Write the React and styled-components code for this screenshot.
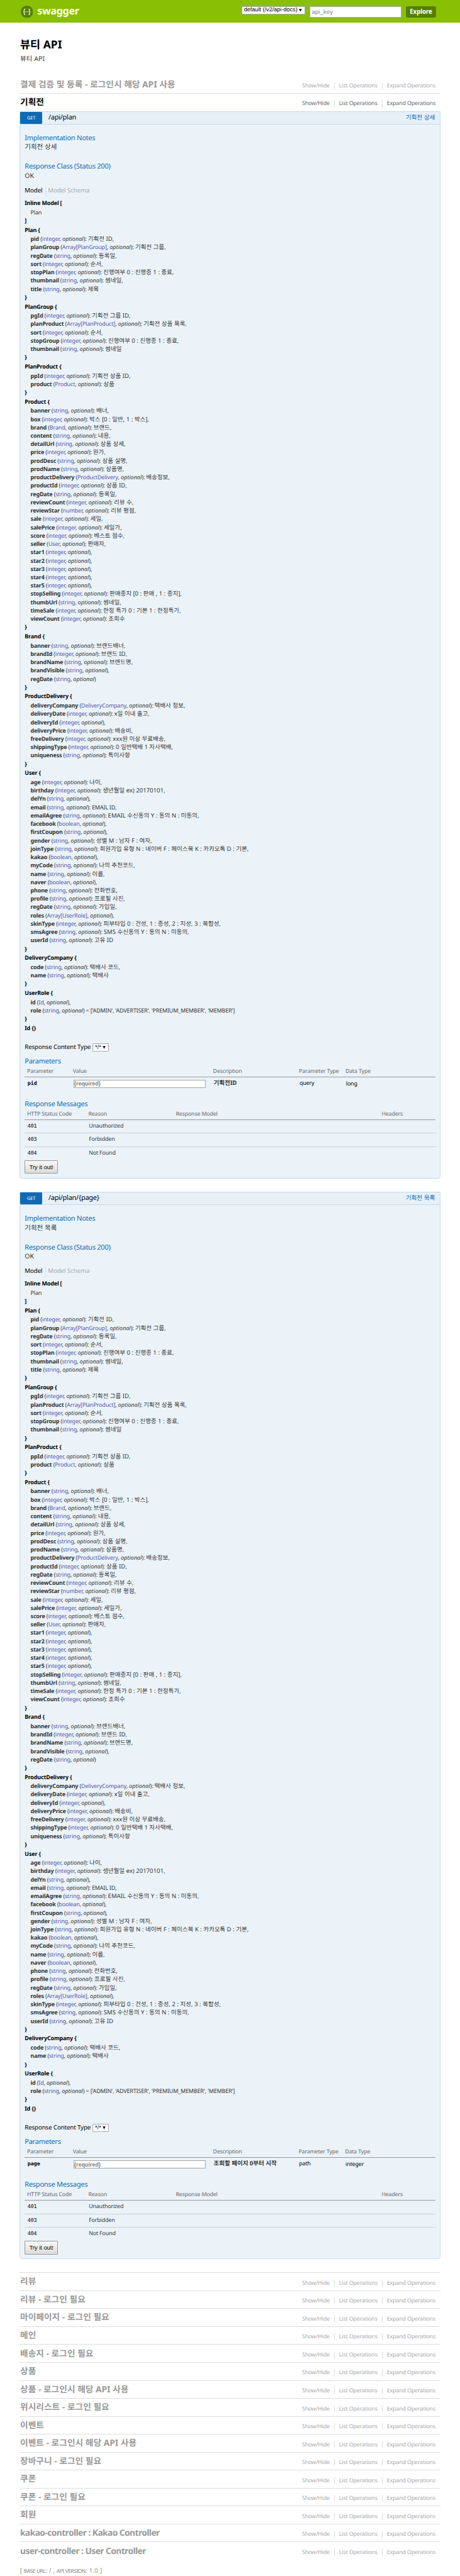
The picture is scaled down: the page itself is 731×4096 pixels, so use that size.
import React from 'react';
import styled, { createGlobalStyle, css } from 'styled-components';

/* Sizes are written in design units; one unit is this many CSS pixels. */
const UNIT = 0.69648;
const u = (n) => `${(n * UNIT).toFixed(3)}px`;

const sans = `"Noto Sans", "Noto Sans CJK KR", sans-serif`;
const control = `"Liberation Sans", "Noto Sans CJK KR", sans-serif`;
const mono = `"DejaVu Sans Mono", monospace`;

const GlobalStyle = createGlobalStyle`
  *, *::before, *::after { box-sizing: border-box; }
  html, body { margin: 0; padding: 0; background: #fff; }
  body {
    font-family: ${sans};
    color: #333;
    text-rendering: geometricPrecision;
  }
  h1, h2, h3, h4, p, ul { margin: 0; padding: 0; font-weight: 400; }
  ul { list-style: none; }
`;

const Header = styled.header`
  display: flex;
  justify-content: space-between;
  height: ${u(52)};
  padding: 0 ${u(55)} 0 ${u(47)};
  background: #89bf04;
`;

const Brand = styled.div`
  display: flex;
  align-items: center;
  gap: ${u(10)};
  height: ${u(52)};
  padding-top: ${u(1.5)};
  font-size: ${u(23.2)};
  font-weight: 700;
  letter-spacing: -0.021em;
  color: #fff;
  svg {
    width: ${u(28)};
    height: ${u(28)};
    display: block;
  }
  span {
    line-height: ${u(28)};
    padding-bottom: ${u(2)};
  }
`;

const ApiForm = styled.form`
  display: flex;
  align-items: flex-start;
  gap: ${u(10)};
  padding-top: ${u(14)};
`;

const SelectBox = styled.div`
  display: flex;
  align-items: center;
  justify-content: space-between;
  width: ${(p) => u(p.$width)};
  height: ${u(19)};
  padding: 0 ${u(6)} 0 ${u(4.5)};
  background: #fff;
  border: 1px solid #a9a9a9;
  border-radius: ${(p) => (p.$rounded ? '1px' : 0)};
  font-family: ${control};
  font-size: ${u(13.1)};
  line-height: ${u(17)};
  white-space: nowrap;
  color: #000;
  svg {
    width: ${u(7)};
    height: ${u(7)};
    margin-bottom: ${u(1)};
  }
`;

const KeyInput = styled.input`
  width: ${u(210)};
  height: ${u(26)};
  margin: 0;
  padding: 0 ${u(3.5)};
  border: 1px solid #a9a9a9;
  background: #fff;
  font-family: ${control};
  font-size: ${u(14)};
  outline: 0;
  &::placeholder { color: #858585; opacity: 1; }
`;

const ExploreButton = styled.button`
  width: ${u(68)};
  height: ${u(26)};
  margin: 0;
  padding: 0;
  border: 0;
  border-radius: ${u(4)};
  background: #547f00;
  color: #fff;
  font: 700 ${u(14)} / ${u(26)} ${sans};
  letter-spacing: -0.01em;
`;

const Page = styled.main`
  padding: ${u(36.3)} ${u(45)} 0;
`;

const Title = styled.h1`
  padding-left: ${u(1)};
  font-size: ${u(25)};
  line-height: ${u(30)};
  font-weight: 700;
  letter-spacing: 0.003em;
  color: #000;
`;

const Description = styled.p`
  margin: ${u(8.6)} 0 ${u(26.1)};
  padding-left: ${u(1)};
  font-size: ${u(15.2)};
  line-height: ${u(20)};
`;

const ResourceRow = styled.div`
  display: flex;
  justify-content: space-between;
  height: ${(p) => u(p.$active ? 40 : 41)};
  padding: 0 ${u(11)} 0 ${u(1)};
  border-bottom: ${(p) => (p.$open ? '0' : '1px solid #ddd')};
`;

const ResourceName = styled.h2`
  padding-top: ${u(4.4)};
  font-size: ${u(19.6)};
  line-height: ${u(28)};
  font-weight: 700;
  letter-spacing: ${(p) => (p.$latin ? '-0.036em' : '0.006em')};
  color: ${(p) => (p.$active ? '#000' : '#999')};
`;

const Options = styled.ul`
  display: flex;
  align-items: flex-start;
  padding-top: ${u(15)};
  color: ${(p) => (p.$active ? '#666' : '#aaa')};
`;

const Option = styled.li`
  height: ${u(16)};
  padding: 0 ${u(10)};
  font-size: ${u(12.8)};
  line-height: ${u(14)};
  letter-spacing: -0.018em;
  & + & { border-left: 1px solid #ddd; }
  &:last-child { padding-right: 0; }
`;

const Operation = styled.section`
  margin-bottom: ${u(30)};
`;

const OperationHeading = styled.div`
  display: flex;
  height: ${u(30)};
  border: 1px solid #c3d9ec;
  background: #e7f0f7;
`;

const Method = styled.span`
  width: ${u(50)};
  padding-top: ${u(1)};
  border-radius: ${u(2)};
  background: #0f6ab4;
  color: #fff;
  text-align: center;
  font-size: ${u(10.6)};
  line-height: ${u(28)};
  letter-spacing: -0.015em;
`;

const Path = styled.h3`
  flex: 1;
  padding-left: ${u(14)};
  font-size: ${u(15.7)};
  line-height: ${u(26)};
  letter-spacing: -0.02em;
  color: #000;
`;

const Summary = styled.span`
  padding-right: ${u(10.5)};
  font-size: ${u(13.8)};
  line-height: ${u(25)};
  color: #0f6ab4;
`;

const OperationBody = styled.div`
  padding: ${u(22)} ${u(10)} ${u(10)};
  height: ${u(2407)};
  border: 1px solid #c3d9ec;
  border-top: 0;
  border-radius: 0 0 ${u(6)} ${u(6)};
  background: #ebf3f9;
`;

const SectionTitle = styled.h4`
  margin-top: ${(p) => u(p.$gap || 0)};
  font-size: ${u(15.8)};
  line-height: ${u(20)};
  letter-spacing: -0.022em;
  color: #0f6ab4;
`;

const Note = styled.p`
  margin-top: ${u(2)};
  font-size: ${u(15.1)};
  line-height: ${u(20)};
`;

const ModelTabs = styled.ul`
  display: flex;
  height: ${u(25)};
  margin: ${u(11)} 0 ${u(5)};
  font-size: ${u(14)};
  line-height: ${u(23)};
  letter-spacing: -0.011em;
`;

const ModelTab = styled.li`
  color: ${(p) => (p.$selected ? '#000' : '#aaa')};
  & + & {
    margin-left: ${u(6)};
    padding-left: ${u(5)};
    border-left: 1px solid #ddd;
  }
`;

const signatureText = css`
  font-size: ${u(12.9)};
  letter-spacing: -0.017em;
  white-space: nowrap;
`;

const ModelBrace = styled.div`
  ${signatureText}
  line-height: ${u(21)};
  font-weight: 700;
  color: #000;
`;

const Property = styled.div`
  ${signatureText}
  padding-left: ${u(13.3)};
  line-height: ${u(19)};
`;

const PropName = styled.span`
  font-weight: 700;
`;

const PropType = styled.span`
  color: #55a;
`;

const PropOptional = styled.span`
  font-style: italic;
  letter-spacing: 0.004em;
`;

const PropNote = styled.span`
  font-size: ${(p) => u(p.$latin ? 12.9 : 13.6)};
  letter-spacing: ${(p) => (p.$latin ? '-0.019em' : '0.004em')};
`;

const ContentTypeRow = styled.div`
  display: flex;
  align-items: flex-start;
  gap: ${u(4)};
  height: ${u(19)};
  margin-top: ${u(24)};
  color: #000;
`;

const ContentTypeLabel = styled.label`
  font-size: ${u(14)};
  line-height: ${u(17.5)};
  letter-spacing: -0.014em;
`;

const paramColumns = css`
  grid-template-columns: ${u(104.5)} ${u(320)} ${(p) => u(p.$descWidth)} ${u(106)} 1fr;
`;

const codeColumns = css`
  grid-template-columns: ${u(140)} ${u(199.5)} ${u(469.5)} 1fr;
`;

const TableHead = styled.div`
  display: grid;
  ${(p) => (p.$codes ? codeColumns : paramColumns)}
  height: ${u(21)};
  margin-top: ${u(5)};
  border-bottom: 1px solid #999;
  font-size: ${u(12.6)};
  line-height: ${u(16)};
  letter-spacing: -0.014em;
  color: #666;
  span { padding-left: ${u(5.3)}; white-space: nowrap; }
`;

const ParamRow = styled.div`
  display: grid;
  ${paramColumns}
  align-items: start;
  height: ${u(52)};
  padding-top: ${u(6)};
`;

const ParamCell = styled.div`
  padding: ${(p) => u(p.$drop || 0)} 0 0 ${u(6.5)};
  font-size: ${u(12.7)};
  line-height: ${u(15)};
  letter-spacing: -0.014em;
  white-space: nowrap;
  color: #000;
`;

const ParamName = styled(ParamCell)`
  font-family: ${mono};
  font-size: ${u(11.9)};
  letter-spacing: 0;
  line-height: ${u(16)};
  font-weight: 700;
`;

const ParamDescription = styled(ParamCell)`
  font-size: ${u(13.6)};
  letter-spacing: 0.003em;
  font-weight: 700;
  color: #333;
`;

const ParamInput = styled.input`
  display: block;
  width: ${u(302)};
  height: ${u(19)};
  margin: 0 0 0 ${u(6.5)};
  padding: 0 0 0 ${u(0.5)};
  border: 1px solid #a3a3a3;
  background: #fff;
  font-family: ${control};
  font-size: ${u(12.9)};
  font-weight: 700;
  outline: 0;
  &::placeholder { color: #808080; opacity: 1; }
`;

const CodeRow = styled.div`
  display: grid;
  ${codeColumns}
  height: ${(p) => u(p.$last ? 30 : 31)};
  border-bottom: ${(p) => (p.$last ? '0' : '1px solid #ccc')};
`;

const StatusCode = styled.span`
  padding-left: ${u(6.3)};
  font-family: ${mono};
  font-size: ${u(11.9)};
  line-height: ${u(28)};
  color: #000;
`;

const Reason = styled.span`
  padding-left: ${u(6.3)};
  font-size: ${u(12.7)};
  line-height: ${u(28.5)};
  letter-spacing: -0.016em;
`;

const TryButton = styled.button`
  display: block;
  width: ${u(76)};
  height: ${u(31)};
  margin: 0;
  padding: 0;
  border: 1px solid #999;
  border-radius: 1px;
  background: linear-gradient(#f8f8f8, #dcdcdc);
  color: #000;
  font: ${u(13.3)} ${control};
`;

const ResourceList = styled.div`
  border-top: 1px solid #ddd;
  padding-top: calc(${u(1)} - 1px);
`;

const Footer = styled.footer`
  margin-top: ${u(15.5)};
  padding-left: ${u(0.5)};
  height: ${u(20)};
  overflow: hidden;
  font-size: ${u(15)};
  line-height: ${u(20)};
  color: #999;
  white-space: nowrap;
`;

const SmallCaps = styled.span`
  font-variant: small-caps;
  letter-spacing: -0.058em;
`;

const SwaggerLogo = () => (
  <svg viewBox="0 0 28 28" fill="none">
    <circle cx="14" cy="14" r="14" fill="#547f00" />
    <g stroke="#fff" strokeWidth="1.7" strokeLinecap="round" strokeLinejoin="round">
      <path d="M10 7.5H9.4Q7.9 7.5 7.9 9V11.8Q7.9 13.7 6.2 14Q7.9 14.3 7.9 16.2V19Q7.9 20.5 9.4 20.5H10" />
      <path d="M18 7.5H18.6Q20.1 7.5 20.1 9V11.8Q20.1 13.7 21.8 14Q20.1 14.3 20.1 16.2V19Q20.1 20.5 18.6 20.5H18" />
    </g>
    <g fill="#fff">
      <circle cx="11" cy="14" r="1" />
      <circle cx="14" cy="14" r="1" />
      <circle cx="17" cy="14" r="1" />
    </g>
  </svg>
);

const Arrow = () => (
  <svg viewBox="0 0 7 7">
    <path d="M0.3 0.3H6.7L3.5 6.8Z" fill="#000" />
  </svg>
);

/* Each property is [name, type, note]; notes carry no trailing comma. */
const I = 'integer';
const S = 'string';
const B = 'boolean';

const MODELS = [
  ['Plan', [
    ['pid', I, '기획전 ID'],
    ['planGroup', 'Array[PlanGroup]', '기획전 그룹'],
    ['regDate', S, '등록일'],
    ['sort', I, '순서'],
    ['stopPlan', I, '진행여부 0 : 진행중 1 : 종료'],
    ['thumbnail', S, '썸네일'],
    ['title', S, '제목'],
  ]],
  ['PlanGroup', [
    ['pgId', I, '기획전 그룹 ID'],
    ['planProduct', 'Array[PlanProduct]', '기획전 상품 목록'],
    ['sort', I, '순서'],
    ['stopGroup', I, '진행여부 0 : 진행중 1 : 종료'],
    ['thumbnail', S, '썸네일'],
  ]],
  ['PlanProduct', [
    ['ppId', I, '기획전 상품 ID'],
    ['product', 'Product', '상품'],
  ]],
  ['Product', [
    ['banner', S, '배너'],
    ['box', I, '박스 [0 : 일반, 1 : 박스]'],
    ['brand', 'Brand', '브랜드'],
    ['content', S, '내용'],
    ['detailUrl', S, '상품 상세'],
    ['price', I, '원가'],
    ['prodDesc', S, '상품 설명'],
    ['prodName', S, '상품명'],
    ['productDelivery', 'ProductDelivery', '배송정보'],
    ['productId', I, '상품 ID'],
    ['regDate', S, '등록일'],
    ['reviewCount', I, '리뷰 수'],
    ['reviewStar', 'number', '리뷰 평점'],
    ['sale', I, '세일'],
    ['salePrice', I, '세일가'],
    ['score', I, '베스트 점수'],
    ['seller', 'User', '판매자'],
    ['star1', I],
    ['star2', I],
    ['star3', I],
    ['star4', I],
    ['star5', I],
    ['stopSelling', I, '판매중지 [0 : 판매 , 1 : 중지]'],
    ['thumbUrl', S, '썸네일'],
    ['timeSale', I, '한정 특가 0 : 기본 1 : 한정특가'],
    ['viewCount', I, '조회수'],
  ]],
  ['Brand', [
    ['banner', S, '브랜드배너'],
    ['brandId', I, '브랜드 ID'],
    ['brandName', S, '브랜드명'],
    ['brandVisible', S],
    ['regDate', S],
  ]],
  ['ProductDelivery', [
    ['deliveryCompany', 'DeliveryCompany', '택배사 정보'],
    ['deliveryDate', I, 'x일 이내 출고'],
    ['deliveryId', I],
    ['deliveryPrice', I, '배송비'],
    ['freeDelivery', I, 'xxx원 이상 무료배송'],
    ['shippingType', I, '0 일반택배 1 자사택배'],
    ['uniqueness', S, '특이사항'],
  ]],
  ['User', [
    ['age', I, '나이'],
    ['birthday', I, '생년월일 ex) 20170101'],
    ['delYn', S],
    ['email', S, 'EMAIL ID'],
    ['emailAgree', S, 'EMAIL 수신동의 Y : 동의 N : 미동의'],
    ['facebook', B],
    ['firstCoupon', S],
    ['gender', S, '성별 M : 남자 F : 여자'],
    ['joinType', S, '회원가입 유형 N : 네이버 F : 페이스북 K : 카카오톡 D : 기본'],
    ['kakao', B],
    ['myCode', S, '나의 추천코드'],
    ['name', S, '이름'],
    ['naver', B],
    ['phone', S, '전화번호'],
    ['profile', S, '프로필 사진'],
    ['regDate', S, '가입일'],
    ['roles', 'Array[UserRole]'],
    ['skinType', I, '피부타입 0 : 건성, 1 : 중성, 2 : 지성, 3 : 복합성'],
    ['smsAgree', S, 'SMS 수신동의 Y : 동의 N : 미동의'],
    ['userId', S, '고유 ID'],
  ]],
  ['DeliveryCompany', [
    ['code', S, '택배사 코드'],
    ['name', S, '택배사'],
  ]],
  ['UserRole', [
    ['id', 'Id'],
    ['role', S, null, "['ADMIN', 'ADVERTISER', 'PREMIUM_MEMBER', 'MEMBER']"],
  ]],
];

const RESPONSES = [
  ['401', 'Unauthorized'],
  ['403', 'Forbidden'],
  ['404', 'Not Found'],
];

const OPERATIONS = [
  {
    path: '/api/plan',
    summary: '기획전 상세',
    descWidth: 196,
    param: { name: 'pid', description: '기획전ID', kind: 'query', type: 'long' },
  },
  {
    path: '/api/plan/{page}',
    summary: '기획전 목록',
    descWidth: 195,
    param: { name: 'page', description: '조회할 페이지 0부터 시작', kind: 'path', type: 'integer' },
  },
];

const RESOURCES = [
  '리뷰',
  '리뷰 - 로그인 필요',
  '마이페이지 - 로그인 필요',
  '메인',
  '배송지 - 로그인 필요',
  '상품',
  '상품 - 로그인시 해당 API 사용',
  '위시리스트 - 로그인 필요',
  '이벤트',
  '이벤트 - 로그인시 해당 API 사용',
  '장바구니 - 로그인 필요',
  '쿠폰',
  '쿠폰 - 로그인 필요',
  '회원',
  'kakao-controller : Kakao Controller',
  'user-controller : User Controller',
];

const isLatin = (text) => /^[\x20-\x7e]*$/.test(text);

function Resource({ name, active, open }) {
  return (
    <ResourceRow $active={active} $open={open}>
      <ResourceName $active={active} $latin={isLatin(name)}>{name}</ResourceName>
      <Options $active={active}>
        <Option>Show/Hide</Option>
        <Option>List Operations</Option>
        <Option>Expand Operations</Option>
      </Options>
    </ResourceRow>
  );
}

function PropertyLine({ property, last }) {
  const [name, type, note, values] = property;
  return (
    <Property>
      <PropName>{name}</PropName> (<PropType>{type}</PropType>, <PropOptional>optional</PropOptional>)
      {note && <>: <PropNote $latin={isLatin(note)}>{note}</PropNote></>}
      {values && <> = <PropNote $latin>{values}</PropNote></>}
      {!last && ','}
    </Property>
  );
}

function Signature() {
  return (
    <div>
      <ModelBrace>Inline Model [</ModelBrace>
      <Property>Plan</Property>
      <ModelBrace>]</ModelBrace>
      {MODELS.map(([name, properties]) => (
        <React.Fragment key={name}>
          <ModelBrace>{name} {'{'}</ModelBrace>
          {properties.map((property, i) => (
            <PropertyLine key={property[0]} property={property} last={i === properties.length - 1} />
          ))}
          <ModelBrace>{'}'}</ModelBrace>
        </React.Fragment>
      ))}
      <ModelBrace>Id {'{}'}</ModelBrace>
    </div>
  );
}

function OperationPanel({ path, summary, descWidth, param }) {
  return (
    <Operation>
      <OperationHeading>
        <Method>GET</Method>
        <Path>{path}</Path>
        <Summary>{summary}</Summary>
      </OperationHeading>
      <OperationBody>
        <SectionTitle>Implementation Notes</SectionTitle>
        <Note>{summary}</Note>
        <SectionTitle $gap={23}>Response Class (Status 200)</SectionTitle>
        <Note>OK</Note>
        <ModelTabs>
          <ModelTab $selected>Model</ModelTab>
          <ModelTab>Model Schema</ModelTab>
        </ModelTabs>
        <Signature />
        <ContentTypeRow>
          <ContentTypeLabel>Response Content Type</ContentTypeLabel>
          <SelectBox $width={38} $rounded>
            */* <Arrow />
          </SelectBox>
        </ContentTypeRow>
        <SectionTitle $gap={12}>Parameters</SectionTitle>
        <TableHead $descWidth={descWidth}>
          <span>Parameter</span>
          <span>Value</span>
          <span>Description</span>
          <span>Parameter Type</span>
          <span>Data Type</span>
        </TableHead>
        <ParamRow $descWidth={descWidth}>
          <ParamName>{param.name}</ParamName>
          <ParamInput placeholder="(required)" />
          <ParamDescription>{param.description}</ParamDescription>
          <ParamCell>{param.kind}</ParamCell>
          <ParamCell $drop={1.5}>{param.type}</ParamCell>
        </ParamRow>
        <SectionTitle>Response Messages</SectionTitle>
        <TableHead $codes>
          <span>HTTP Status Code</span>
          <span>Reason</span>
          <span>Response Model</span>
          <span>Headers</span>
        </TableHead>
        {RESPONSES.map(([code, reason], i) => (
          <CodeRow key={code} $last={i === RESPONSES.length - 1}>
            <StatusCode>{code}</StatusCode>
            <Reason>{reason}</Reason>
          </CodeRow>
        ))}
        <TryButton>Try it out!</TryButton>
      </OperationBody>
    </Operation>
  );
}

export default function App() {
  return (
    <>
      <GlobalStyle />
      <Header>
        <Brand>
          <SwaggerLogo />
          <span>swagger</span>
        </Brand>
        <ApiForm>
          <SelectBox $width={146}>
            default (/v2/api-docs) <Arrow />
          </SelectBox>
          <KeyInput placeholder="api_key" />
          <ExploreButton type="button">Explore</ExploreButton>
        </ApiForm>
      </Header>
      <Page>
        <Title>뷰티 API</Title>
        <Description>뷰티 API</Description>
        <Resource name="결제 검증 및 등록 - 로그인시 해당 API 사용" />
        <Resource name="기획전" active open />
        {OPERATIONS.map((operation) => (
          <OperationPanel key={operation.path} {...operation} />
        ))}
        <ResourceList>
          {RESOURCES.map((name, i) => (
            <Resource key={name} name={name} open={i === RESOURCES.length - 1} />
          ))}
        </ResourceList>
        <Footer>
          [ <SmallCaps>base url</SmallCaps>: / , <SmallCaps>api version</SmallCaps>: 1.0 ]
        </Footer>
      </Page>
    </>
  );
}
